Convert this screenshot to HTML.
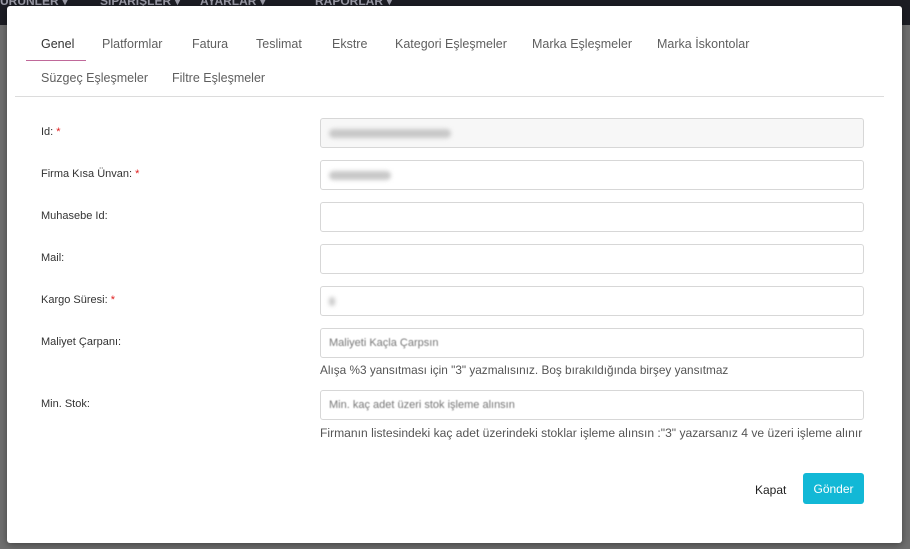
<!DOCTYPE html>
<html><head><meta charset="utf-8"><style>
*{box-sizing:border-box;margin:0;padding:0}
body{width:910px;height:549px;overflow:hidden;background:#6f6f6f;font-family:"Liberation Sans",sans-serif;position:relative}
.nav{position:absolute;left:0;top:0;width:910px;height:25px;background:#1c1d24}
.nav span{position:absolute;top:-6px;color:#9a9aa6;font-size:12px;font-weight:bold}
.modal{position:absolute;left:7px;top:6px;width:895px;height:537px;background:#fff;border-radius:3px;box-shadow:0 2px 8px rgba(0,0,0,.4)}
.tab{position:absolute;font-size:12.5px;color:#5f5f5f}
.ul{position:absolute;left:19px;top:54px;width:60px;height:1px;background:#c0699a}
.sep{position:absolute;left:8px;top:90px;width:869px;height:1px;background:#dcdcdc}
.lbl{position:absolute;left:34px;font-size:11px;color:#333}
.lbl b{color:#e02020;font-weight:normal}
.inp{position:absolute;left:313px;width:544px;height:30px;border:1px solid #d7d7d7;border-radius:3px;background:#fff}
.blur{position:absolute;left:8px;top:10px;height:9px;background:#c8c8c8;border-radius:5px;filter:blur(2px)}
.ph{position:absolute;left:8px;top:8px;font-size:11px;color:#777;filter:blur(.5px)}
.help{position:absolute;left:313px;font-size:11.8px;color:#555}
.btn{position:absolute;left:796px;top:467px;width:61px;height:31px;background:#12b8d6;border-radius:3px;color:#fff;font-size:12px;text-align:center;line-height:32px}
</style></head><body>
<div class="nav"><span style="left:0">ÜRÜNLER ▾</span><span style="left:100px">SİPARİŞLER ▾</span><span style="left:200px">AYARLAR ▾</span><span style="left:315px">RAPORLAR ▾</span></div>
<div class="modal">
<div class="tab" style="left:34px;top:31px;color:#333">Genel</div>
<div class="tab" style="left:95px;top:31px">Platformlar</div>
<div class="tab" style="left:185px;top:31px">Fatura</div>
<div class="tab" style="left:249px;top:31px">Teslimat</div>
<div class="tab" style="left:325px;top:31px">Ekstre</div>
<div class="tab" style="left:388px;top:31px">Kategori Eşleşmeler</div>
<div class="tab" style="left:525px;top:31px">Marka Eşleşmeler</div>
<div class="tab" style="left:650px;top:31px">Marka İskontolar</div>
<div class="ul"></div>
<div class="tab" style="left:34px;top:65px">Süzgeç Eşleşmeler</div>
<div class="tab" style="left:165px;top:65px">Filtre Eşleşmeler</div>
<div class="sep"></div>

<div class="lbl" style="top:120px">Id: <b>*</b></div>
<div class="inp" style="top:112px;background:#f7f7f7"><div class="blur" style="width:122px"></div></div>
<div class="lbl" style="top:162px">Firma Kısa Ünvan: <b>*</b></div>
<div class="inp" style="top:154px"><div class="blur" style="width:62px"></div></div>
<div class="lbl" style="top:204px">Muhasebe Id:</div>
<div class="inp" style="top:196px"></div>
<div class="lbl" style="top:246px">Mail:</div>
<div class="inp" style="top:238px"></div>
<div class="lbl" style="top:288px">Kargo Süresi: <b>*</b></div>
<div class="inp" style="top:280px"><div class="blur" style="width:6px"></div></div>
<div class="lbl" style="top:330px">Maliyet Çarpanı:</div>
<div class="inp" style="top:322px"><div class="ph">Maliyeti Kaçla Çarpsın</div></div>
<div class="help" style="top:357px">Alışa %3 yansıtması için "3" yazmalısınız. Boş bırakıldığında birşey yansıtmaz</div>
<div class="lbl" style="top:392px">Min. Stok:</div>
<div class="inp" style="top:384px"><div class="ph">Min. kaç adet üzeri stok işleme alınsın</div></div>
<div class="help" style="top:420px;font-size:12.1px">Firmanın listesindeki kaç adet üzerindeki stoklar işleme alınsın :"3" yazarsanız 4 ve üzeri işleme alınır</div>
<div style="position:absolute;left:748px;top:477px;font-size:12px;color:#222">Kapat</div>
<div class="btn">Gönder</div>
</div>
</body></html>
